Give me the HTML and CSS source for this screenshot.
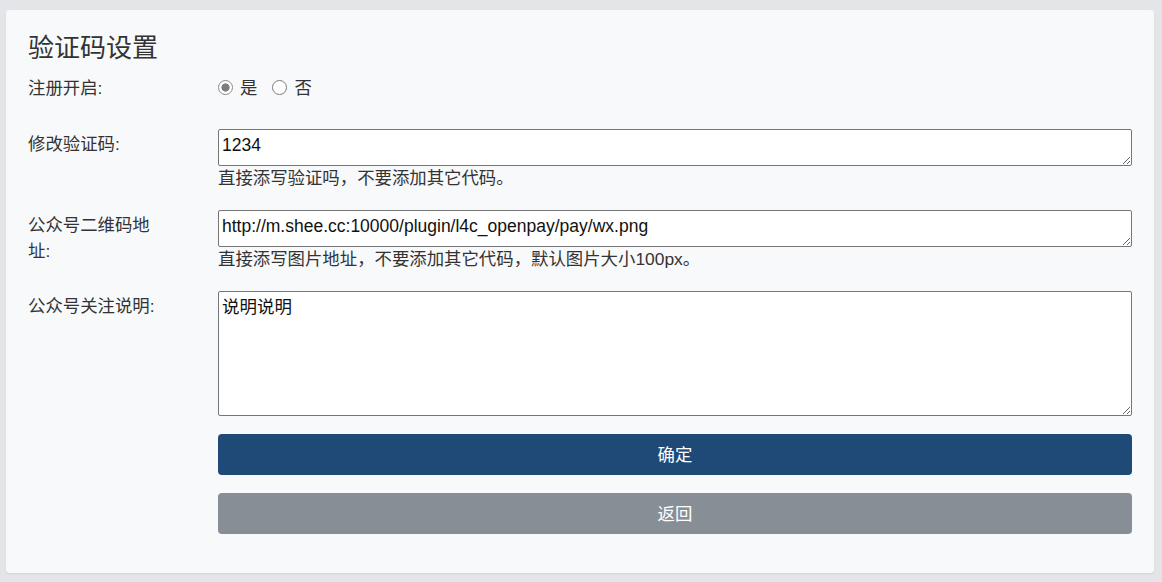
FILE: index.html
```html
<!DOCTYPE html>
<html lang="zh-CN">
<head>
<meta charset="utf-8">
<title>验证码设置</title>
<link rel="stylesheet" href="styles.css">
</head>
<body>
<div class="card">
  <h1 class="title">验证码设置</h1>
  <form class="form">
    <div class="row row-radio">
      <label class="label">注册开启:</label>
      <div class="control radios">
        <label class="opt"><input type="radio" name="reg" class="radio" checked><span>是</span></label>
        <label class="opt"><input type="radio" name="reg" class="radio"><span>否</span></label>
      </div>
    </div>
    <div class="row">
      <label class="label">修改验证码:</label>
      <div class="control">
        <textarea class="field field-short">1234</textarea>
        <div class="help">直接添写验证吗，不要添加其它代码。</div>
      </div>
    </div>
    <div class="row">
      <label class="label">公众号二维码地址:</label>
      <div class="control">
        <textarea class="field field-short">http://m.shee.cc:10000/plugin/l4c_openpay/pay/wx.png</textarea>
        <div class="help">直接添写图片地址，不要添加其它代码，默认图片大小100px。</div>
      </div>
    </div>
    <div class="row">
      <label class="label">公众号关注说明:</label>
      <div class="control">
        <textarea class="field field-tall">说明说明</textarea>
      </div>
    </div>
    <div class="row row-btn">
      <div class="label"></div>
      <div class="control buttons">
        <button type="button" class="btn btn-primary">确定</button>
        <button type="button" class="btn btn-secondary">返回</button>
      </div>
    </div>
  </form>
</div>
</body>
</html>
```

FILE: styles.css
```css
html, body {
  margin: 0;
  padding: 0;
}
body {
  background: #e3e5e8;
  font-family: "Liberation Sans", "Noto Sans CJK SC", sans-serif;
  color: #333;
  padding: 10px 8px 9px 6px;
}
.card {
  background: #f8f9fb;
  border-radius: 4px;
  padding: 22px 22px 39px 22px;
  box-shadow: 0 1px 2px rgba(0,0,0,0.08);
}
.title {
  margin: 0 0 12px 0;
  font-size: 26px;
  font-weight: normal;
  line-height: 32px;
  color: #333;
}
.row {
  display: grid;
  grid-template-columns: 190px 1fr;
  margin-bottom: 20px;
}
.row-radio {
  height: 33px;
}
.label {
  width: 134px;
  font-size: 17.4px;
  line-height: 26px;
  padding-top: 2px;
  color: #333;
}
.row-radio .label {
  padding-top: 0;
  line-height: 24px;
}
.control {
  display: flex;
  flex-direction: column;
}
.radios {
  flex-direction: row;
  align-items: center;
  height: 24px;
  gap: 15px;
}
.opt {
  display: flex;
  align-items: center;
  gap: 7px;
  font-size: 17.4px;
  line-height: 24px;
}
.radio {
  appearance: none;
  -webkit-appearance: none;
  box-sizing: border-box;
  margin: 0;
  width: 15px;
  height: 15px;
  border-radius: 50%;
  border: 1px solid #7a7a7a;
  background: #fff;
  position: relative;
  top: -1px;
}
.radio:checked {
  border-color: #8a8a8a;
  background: radial-gradient(circle, #7d7d7d 0 3.8px, #fff 4.4px);
}
.field {
  display: block;
  box-sizing: border-box;
  width: 100%;
  margin: 0;
  border: 1px solid #767676;
  border-radius: 2px;
  background: #fff;
  color: #111;
  font-family: "Liberation Sans", "Noto Sans CJK SC", sans-serif;
  font-size: 17.5px;
  line-height: 22px;
  padding: 4px 3px;
  resize: vertical;
}
.field-short {
  height: 37px;
}
.field-tall {
  height: 125px;
}
.help {
  font-size: 17.4px;
  line-height: 24px;
  color: #333;
}
.row-btn {
  margin-top: -2px;
  margin-bottom: 0;
}
.buttons {
  gap: 18px;
}
.btn {
  height: 41px;
  border: none;
  border-radius: 4px;
  color: #fff;
  font-family: "Liberation Sans", "Noto Sans CJK SC", sans-serif;
  font-size: 17.4px;
  padding: 0 0 3px 0;
  cursor: pointer;
}
.btn-primary {
  background: #1f4a78;
}
.btn-secondary {
  background: #888e96;
}
```
